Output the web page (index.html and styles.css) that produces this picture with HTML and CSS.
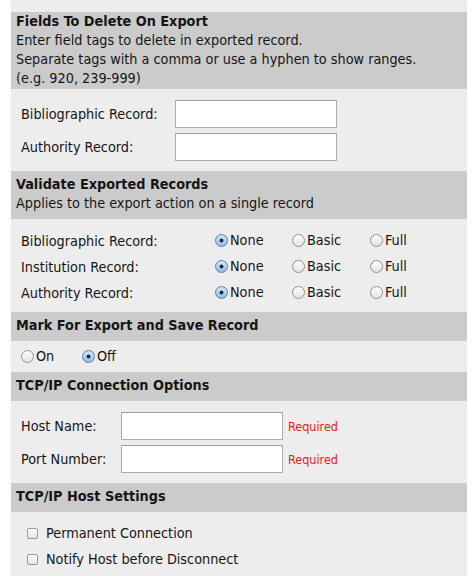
FILE: index.html
```html
<!DOCTYPE html>
<html lang="en">
<head>
    <meta charset="UTF-8">
    <title>Export Settings</title>
    <link rel="stylesheet" href="styles.css">
</head>
<body>
    <div class="panel">
        <div class="section-head first">
            <h3>Fields To Delete On Export</h3>
            <p>Enter field tags to delete in exported record.</p>
            <p>Separate tags with a comma or use a hyphen to show ranges.</p>
            <p>(e.g. 920, 239-999)</p>
        </div>
        <div class="section-body fields">
            <label for="delBib">Bibliographic Record:</label>
            <input type="text" id="delBib">
            <label for="delAuth">Authority Record:</label>
            <input type="text" id="delAuth">
        </div>

        <div class="section-head">
            <h3>Validate Exported Records</h3>
            <p>Applies to the export action on a single record</p>
        </div>
        <div class="section-body validate">
            <span>Bibliographic Record:</span>
            <label class="opt"><input type="radio" name="vBib" checked>None</label>
            <label class="opt"><input type="radio" name="vBib">Basic</label>
            <label class="opt"><input type="radio" name="vBib">Full</label>

            <span>Institution Record:</span>
            <label class="opt"><input type="radio" name="vInst" checked>None</label>
            <label class="opt"><input type="radio" name="vInst">Basic</label>
            <label class="opt"><input type="radio" name="vInst">Full</label>

            <span>Authority Record:</span>
            <label class="opt"><input type="radio" name="vAuth" checked>None</label>
            <label class="opt"><input type="radio" name="vAuth">Basic</label>
            <label class="opt"><input type="radio" name="vAuth">Full</label>
        </div>

        <div class="section-head">
            <h3>Mark For Export and Save Record</h3>
        </div>
        <div class="section-body mark">
            <label class="opt"><input type="radio" name="mark">On</label>
            <label class="opt"><input type="radio" name="mark" checked>Off</label>
        </div>

        <div class="section-head">
            <h3>TCP/IP Connection Options</h3>
        </div>
        <div class="section-body connection">
            <label for="host">Host Name:</label>
            <input type="text" id="host">
            <span class="required">Required</span>
            <label for="port">Port Number:</label>
            <input type="text" id="port">
            <span class="required">Required</span>
        </div>

        <div class="section-head">
            <h3>TCP/IP Host Settings</h3>
        </div>
        <div class="section-body host">
            <label class="check"><input type="checkbox">Permanent Connection</label>
            <label class="check"><input type="checkbox">Notify Host before Disconnect</label>
        </div>
    </div>
</body>
</html>
```

FILE: styles.css
```css
* {
    box-sizing: border-box;
    margin: 0;
    padding: 0;
}

body {
    background: #fff;
    font-family: 'DejaVu Sans Condensed', 'DejaVu Sans', Verdana, sans-serif;
    font-size: 14.3px;
    color: #151515;
}

.panel {
    margin-left: 11px;
    width: 456px;
    min-height: 576px;
    background: #ededed;
    padding-top: 12px;
}

.section-head {
    background: #cbcbcb;
    padding: 4px 5px 6px;
}

.section-head.first {
    padding: 0 5px 1px;
}

.section-head h3 {
    font-size: 14.3px;
    font-weight: bold;
    line-height: 19px;
}

.section-head p {
    line-height: 19px;
}

.section-body {
    padding: 11px 10px 10px;
}

input[type="text"] {
    height: 28px;
    width: 162px;
    border: 1px solid #adadad;
    border-top-color: #9c9c9c;
    background: #fff;
    font: inherit;
    padding: 2px 4px;
}

.fields {
    display: grid;
    grid-template-columns: 154px 162px;
    row-gap: 5px;
    align-items: center;
}

.validate {
    display: grid;
    grid-template-columns: 194px 77px 78px auto;
    row-gap: 7px;
    align-items: center;
    padding-top: 12px;
    padding-bottom: 10px;
}

.opt {
    display: flex;
    align-items: center;
    line-height: 19px;
}

input[type="radio"] {
    appearance: none;
    -webkit-appearance: none;
    width: 13px;
    height: 13px;
    border-radius: 50%;
    border: 1px solid #929292;
    background: linear-gradient(#fdfdfd, #e2e2e2);
    margin-right: 2px;
    flex-shrink: 0;
}

input[type="radio"]:checked {
    border-color: #5d7ea9;
    background: radial-gradient(circle, #17263a 0 1.6px, transparent 2.3px),
                linear-gradient(#d3e7f9, #8fbde6);
}

.mark {
    display: flex;
    padding-top: 6px;
    padding-bottom: 6px;
}

.mark .opt:first-child {
    width: 61px;
}

.connection {
    display: grid;
    grid-template-columns: 100px 162px auto;
    row-gap: 5px;
    align-items: center;
}

.required {
    color: #ec1a10;
    font-size: 12.5px;
    padding-left: 5px;
}

.host {
    display: flex;
    flex-direction: column;
    gap: 7px;
    padding: 12px 16px 0;
}

.check {
    display: flex;
    align-items: center;
    line-height: 19px;
}

input[type="checkbox"] {
    appearance: none;
    -webkit-appearance: none;
    width: 11px;
    height: 11px;
    border: 1px solid #9a9a9a;
    border-radius: 2px;
    background: linear-gradient(#fdfdfd, #e4e4e4);
    margin-right: 8px;
}
```
